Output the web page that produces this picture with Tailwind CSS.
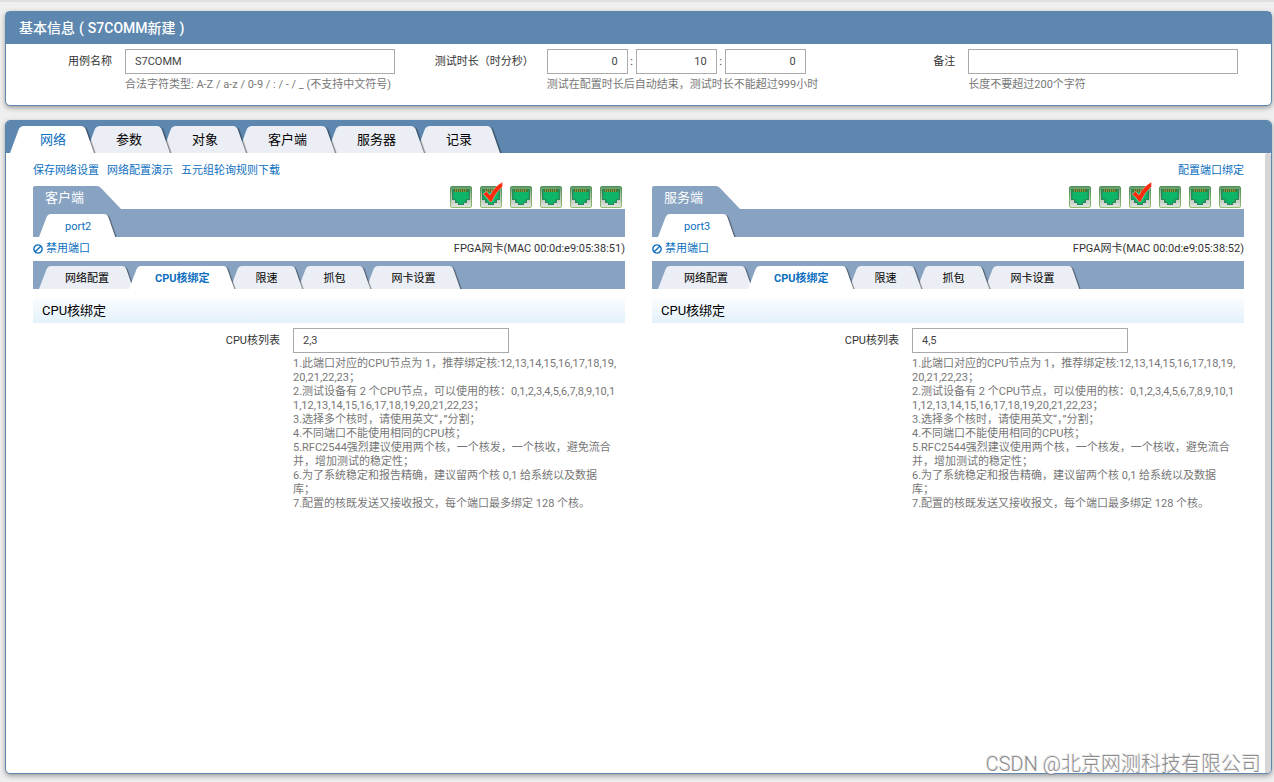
<!DOCTYPE html>
<html lang="zh-CN">
<head>
<meta charset="utf-8">
<title>S7COMM新建</title>
<script src="https://cdn.jsdelivr.net/npm/@tailwindcss/browser@4"></script>
</head>
<body class="relative flex h-screen flex-col gap-[14px] bg-[#efefef] pt-[11px] pr-[2px] pb-2 pl-[5px] font-['Roboto','Noto_Sans_CJK_SC',sans-serif] text-[11px] leading-[14px] text-[#333]">

<svg class="absolute size-0" aria-hidden="true">
  <defs>
    <linearGradient id="port-bg" x1="0" y1="0" x2="0" y2="1"><stop offset="0" stop-color="#5c9a62"/><stop offset=".35" stop-color="#a9b8a8"/><stop offset="1" stop-color="#e4e4e2"/></linearGradient>
    <linearGradient id="port-edge" x1="0" y1="0" x2="0" y2="1"><stop offset="0" stop-color="#4d9154"/><stop offset="1" stop-color="#94bf6c"/></linearGradient>
  </defs>
  <symbol id="tab-left" viewBox="0 0 16 27" preserveAspectRatio="none"><path fill="currentColor" d="M16 0H14Q10 0 8.500 4L0 27H16Z"/></symbol>
  <symbol id="tab-right" viewBox="0 0 20 27" preserveAspectRatio="none">
    <path fill="#000" fill-opacity=".15" d="M0 1H7Q10.500 1 12 4L20 27H0Z"/>
    <path fill="#000" fill-opacity=".35" d="M0 .5H6Q9.500 .5 11 4L19.200 27H0Z"/>
    <path fill="currentColor" d="M0 0H5Q8.500 0 10 4L18 27H0Z"/>
  </symbol>
  <symbol id="port" viewBox="0 0 22 22">
    <rect x=".5" y=".5" width="21" height="21" rx="1.500" fill="url(#port-bg)" stroke="url(#port-edge)"/>
    <path fill="#2a8a58" d="M2 3H20V14H17V17H14V19H8V17H5V14H2Z"/>
    <path fill="#0cb568" d="M3.500 5H18.500V13H15.500V16H13V18H9V16H6.500V13H3.500Z"/>
    <path fill="#3f7a35" d="M4 3H18V6H4Z"/>
    <path stroke="#8f8c40" stroke-width="1" d="M5.500 3V6M7.500 3V6M9.500 3V6M11.500 3V6M13.500 3V6M15.500 3V6"/>
  </symbol>
  <symbol id="check" viewBox="0 0 20 20"><path fill="#ff2a0c" stroke="#fff" stroke-opacity=".6" stroke-width=".6" d="M0 12L3.500 9.500L7 13Q11 5 19.500 0V4.500Q13 10 8.500 20H7Q4 15 0 12Z"/></symbol>
  <symbol id="ban" viewBox="0 0 10 10"><path fill="none" stroke="currentColor" stroke-width="1.400" d="M5 .9A4.100 4.100 0 1 1 4.990 .9M2.200 7.800L7.800 2.200"/></symbol>
</svg>

<div class="absolute inset-x-0 top-0 h-[2px] bg-[#dfdfdf]"></div>

<section class="shrink-0 rounded-[5px] border border-[#5d87af] bg-white pb-[13px] shadow-[0_2px_5px_rgba(0,0,0,0.35)]">
  <h1 class="flex h-8 items-center gap-1 bg-[#5d87af] pl-[13px] text-[14px] font-medium text-white"><span>基本信息</span><span>(</span><span>S7COMM新建</span><span>)</span></h1>
  <form class="grid grid-cols-3 pt-[5px]">
    <div class="flex gap-[13px]">
      <label for="name" class="w-[106px] shrink-0 pt-[6px] text-right">用例名称</label>
      <div>
        <input id="name" type="text" value="S7COMM" class="block h-[25px] w-[270px] border border-[#aaa] px-[9px] text-[#444]">
        <p class="pt-1 text-[#777]">合法字符类型: A-Z / a-z / 0-9 / : / - / _ (不支持中文符号)</p>
      </div>
    </div>
    <div class="flex gap-[13px]">
      <label for="hours" class="w-[106px] shrink-0 pt-[6px] text-right">测试时长（时分秒）</label>
      <div>
        <div class="flex items-center">
          <input id="hours" type="text" value="0" class="h-[25px] w-[81px] border border-[#aaa] px-[9px] text-right text-[#444]">
          <span class="w-2 text-center">:</span>
          <input aria-label="分" type="text" value="10" class="h-[25px] w-[81px] border border-[#aaa] px-[9px] text-right text-[#444]">
          <span class="w-2 text-center">:</span>
          <input aria-label="秒" type="text" value="0" class="h-[25px] w-[81px] border border-[#aaa] px-[9px] text-right text-[#444]">
        </div>
        <p class="pt-1 text-[#777]">测试在配置时长后自动结束，测试时长不能超过999小时</p>
      </div>
    </div>
    <div class="flex gap-[13px]">
      <label for="note" class="w-[106px] shrink-0 pt-[6px] text-right">备注</label>
      <div>
        <input id="note" type="text" class="block h-[25px] w-[270px] border border-[#aaa] px-[9px]">
        <p class="pt-1 text-[#777]">长度不要超过200个字符</p>
      </div>
    </div>
  </form>
</section>

<section class="flex min-h-0 grow flex-col overflow-hidden rounded-[5px] border border-[#5d87af] bg-white shadow-[0_2px_5px_rgba(0,0,0,0.35)]">
  <nav class="flex h-8 shrink-0 items-end bg-[#5d87af] pl-1 text-[13px] text-black">
    <button class="relative z-6 -mr-[10px] flex h-[27px] text-white"><svg class="h-full w-4"><use href="#tab-left"/></svg><span class="flex h-full items-center bg-white pr-[10px] pl-[14px] text-[#0d6fc0]">网络</span><svg class="h-full w-5"><use href="#tab-right"/></svg></button>
    <button class="relative z-5 -mr-[10px] flex h-[27px] text-[#ebeef4]"><svg class="h-full w-4"><use href="#tab-left"/></svg><span class="flex h-full items-center bg-[#ebeef4] pr-[10px] pl-[14px] text-black">参数</span><svg class="h-full w-5"><use href="#tab-right"/></svg></button>
    <button class="relative z-4 -mr-[10px] flex h-[27px] text-[#ebeef4]"><svg class="h-full w-4"><use href="#tab-left"/></svg><span class="flex h-full items-center bg-[#ebeef4] pr-[10px] pl-[14px] text-black">对象</span><svg class="h-full w-5"><use href="#tab-right"/></svg></button>
    <button class="relative z-3 -mr-[10px] flex h-[27px] text-[#ebeef4]"><svg class="h-full w-4"><use href="#tab-left"/></svg><span class="flex h-full items-center bg-[#ebeef4] pr-[10px] pl-[14px] text-black">客户端</span><svg class="h-full w-5"><use href="#tab-right"/></svg></button>
    <button class="relative z-2 -mr-[10px] flex h-[27px] text-[#ebeef4]"><svg class="h-full w-4"><use href="#tab-left"/></svg><span class="flex h-full items-center bg-[#ebeef4] pr-[10px] pl-[14px] text-black">服务器</span><svg class="h-full w-5"><use href="#tab-right"/></svg></button>
    <button class="relative z-1 flex h-[27px] text-[#ebeef4]"><svg class="h-full w-4"><use href="#tab-left"/></svg><span class="flex h-full items-center bg-[#ebeef4] pr-[10px] pl-[14px] text-black">记录</span><svg class="h-full w-5"><use href="#tab-right"/></svg></button>
  </nav>

  <div class="flex min-h-0 grow">
    <main class="min-w-0 grow pt-[11px] pr-[21px] pl-[27px]">
      <div class="flex gap-2 text-[#0d6fc0]">
        <a href="#">保存网络设置</a><a href="#">网络配置演示</a><a href="#">五元组轮询规则下载</a><a href="#" class="ml-auto">配置端口绑定</a>
      </div>

      <div class="grid grid-cols-2 gap-[27px] pt-2">
        <section>
          <div class="flex h-[23px] items-start justify-between pr-[3px]">
            <div class="flex text-[#87a3c1]"><h2 class="flex h-[23px] w-16 items-center rounded-tl-[2px] bg-[#87a3c1] pl-3 text-[13px] text-white">客户端</h2><svg class="h-[23px] w-6" viewBox="0 0 24 23"><path fill="currentColor" d="M0 0Q2 0 4 2L24 23H0Z"/></svg></div>
            <div class="flex gap-2">
              <svg class="size-[22px]"><use href="#port"/></svg>
              <span class="relative"><svg class="size-[22px]"><use href="#port"/></svg><svg class="absolute -top-1 left-[3px] size-5"><use href="#check"/></svg></span>
              <svg class="size-[22px]"><use href="#port"/></svg>
              <svg class="size-[22px]"><use href="#port"/></svg>
              <svg class="size-[22px]"><use href="#port"/></svg>
              <svg class="size-[22px]"><use href="#port"/></svg>
            </div>
          </div>
          <div class="flex h-7 items-end bg-[#87a3c1] pl-[6px]">
            <button class="flex h-[23px] text-white"><svg class="h-full w-[14px]"><use href="#tab-left"/></svg><span class="flex h-full items-center bg-white pt-[2px] pr-[9px] pl-3 text-[#0d6fc0]">port2</span><svg class="h-full w-[17px]"><use href="#tab-right"/></svg></button>
          </div>
          <div class="flex h-6 items-center justify-between">
            <a href="#" class="flex items-center gap-[3px] text-[#0d6fc0]"><svg class="size-[10px]"><use href="#ban"/></svg>禁用端口</a>
            <span>FPGA网卡(MAC 00:0d:e9:05:38:51)</span>
          </div>
          <div class="flex h-7 items-end bg-[#87a3c1] pl-[6px]">
            <button class="relative z-4 -mr-[6px] flex h-[23px] text-[#ebeef4]"><svg class="h-full w-[14px]"><use href="#tab-left"/></svg><span class="flex h-full items-center bg-[#ebeef4] pt-[2px] pr-[9px] pl-3 text-black">网络配置</span><svg class="h-full w-[17px]"><use href="#tab-right"/></svg></button>
            <button class="relative z-5 -mr-[6px] flex h-[23px] text-white"><svg class="h-full w-[14px]"><use href="#tab-left"/></svg><span class="flex h-full items-center bg-white pt-[2px] pr-[9px] pl-3 font-bold text-[#0d6fc0]">CPU核绑定</span><svg class="h-full w-[17px]"><use href="#tab-right"/></svg></button>
            <button class="relative z-3 -mr-[6px] flex h-[23px] text-[#ebeef4]"><svg class="h-full w-[14px]"><use href="#tab-left"/></svg><span class="flex h-full items-center bg-[#ebeef4] pt-[2px] pr-[9px] pl-3 text-black">限速</span><svg class="h-full w-[17px]"><use href="#tab-right"/></svg></button>
            <button class="relative z-2 -mr-[6px] flex h-[23px] text-[#ebeef4]"><svg class="h-full w-[14px]"><use href="#tab-left"/></svg><span class="flex h-full items-center bg-[#ebeef4] pt-[2px] pr-[9px] pl-3 text-black">抓包</span><svg class="h-full w-[17px]"><use href="#tab-right"/></svg></button>
            <button class="relative z-1 flex h-[23px] text-[#ebeef4]"><svg class="h-full w-[14px]"><use href="#tab-left"/></svg><span class="flex h-full items-center bg-[#ebeef4] pt-[2px] pr-[9px] pl-3 text-black">网卡设置</span><svg class="h-full w-[17px]"><use href="#tab-right"/></svg></button>
          </div>
          <h3 class="mt-[9px] flex h-[25px] items-center bg-linear-to-b from-[#fbfdff] to-[#e3f1fa] pl-[9px] text-[13px] text-black">CPU核绑定</h3>
          <div class="flex gap-[13px] pt-[5px]">
            <label for="cores-a" class="w-[247px] shrink-0 pt-[6px] text-right">CPU核列表</label>
            <div class="whitespace-nowrap">
              <input id="cores-a" type="text" value="2,3" class="block h-[25px] w-[216px] border border-[#aaa] px-[9px] text-[#444]">
              <p class="pt-1 text-[#777]">1.此端口对应的CPU节点为 1，推荐绑定核:12,13,14,15,16,17,18,19,<br>20,21,22,23；<br>2.测试设备有 2 个CPU节点，可以使用的核：0,1,2,3,4,5,6,7,8,9,10,1<br>1,12,13,14,15,16,17,18,19,20,21,22,23；<br>3.选择多个核时，请使用英文“，”分割；<br>4.不同端口不能使用相同的CPU核；<br>5.RFC2544强烈建议使用两个核，一个核发，一个核收，避免流合<br>并，增加测试的稳定性；<br>6.为了系统稳定和报告精确，建议留两个核 0,1 给系统以及数据<br>库；<br>7.配置的核既发送又接收报文，每个端口最多绑定 128 个核。</p>
            </div>
          </div>
        </section>

        <section>
          <div class="flex h-[23px] items-start justify-between pr-[3px]">
            <div class="flex text-[#87a3c1]"><h2 class="flex h-[23px] w-16 items-center rounded-tl-[2px] bg-[#87a3c1] pl-3 text-[13px] text-white">服务端</h2><svg class="h-[23px] w-6" viewBox="0 0 24 23"><path fill="currentColor" d="M0 0Q2 0 4 2L24 23H0Z"/></svg></div>
            <div class="flex gap-2">
              <svg class="size-[22px]"><use href="#port"/></svg>
              <svg class="size-[22px]"><use href="#port"/></svg>
              <span class="relative"><svg class="size-[22px]"><use href="#port"/></svg><svg class="absolute -top-1 left-[3px] size-5"><use href="#check"/></svg></span>
              <svg class="size-[22px]"><use href="#port"/></svg>
              <svg class="size-[22px]"><use href="#port"/></svg>
              <svg class="size-[22px]"><use href="#port"/></svg>
            </div>
          </div>
          <div class="flex h-7 items-end bg-[#87a3c1] pl-[6px]">
            <button class="flex h-[23px] text-white"><svg class="h-full w-[14px]"><use href="#tab-left"/></svg><span class="flex h-full items-center bg-white pt-[2px] pr-[9px] pl-3 text-[#0d6fc0]">port3</span><svg class="h-full w-[17px]"><use href="#tab-right"/></svg></button>
          </div>
          <div class="flex h-6 items-center justify-between">
            <a href="#" class="flex items-center gap-[3px] text-[#0d6fc0]"><svg class="size-[10px]"><use href="#ban"/></svg>禁用端口</a>
            <span>FPGA网卡(MAC 00:0d:e9:05:38:52)</span>
          </div>
          <div class="flex h-7 items-end bg-[#87a3c1] pl-[6px]">
            <button class="relative z-4 -mr-[6px] flex h-[23px] text-[#ebeef4]"><svg class="h-full w-[14px]"><use href="#tab-left"/></svg><span class="flex h-full items-center bg-[#ebeef4] pt-[2px] pr-[9px] pl-3 text-black">网络配置</span><svg class="h-full w-[17px]"><use href="#tab-right"/></svg></button>
            <button class="relative z-5 -mr-[6px] flex h-[23px] text-white"><svg class="h-full w-[14px]"><use href="#tab-left"/></svg><span class="flex h-full items-center bg-white pt-[2px] pr-[9px] pl-3 font-bold text-[#0d6fc0]">CPU核绑定</span><svg class="h-full w-[17px]"><use href="#tab-right"/></svg></button>
            <button class="relative z-3 -mr-[6px] flex h-[23px] text-[#ebeef4]"><svg class="h-full w-[14px]"><use href="#tab-left"/></svg><span class="flex h-full items-center bg-[#ebeef4] pt-[2px] pr-[9px] pl-3 text-black">限速</span><svg class="h-full w-[17px]"><use href="#tab-right"/></svg></button>
            <button class="relative z-2 -mr-[6px] flex h-[23px] text-[#ebeef4]"><svg class="h-full w-[14px]"><use href="#tab-left"/></svg><span class="flex h-full items-center bg-[#ebeef4] pt-[2px] pr-[9px] pl-3 text-black">抓包</span><svg class="h-full w-[17px]"><use href="#tab-right"/></svg></button>
            <button class="relative z-1 flex h-[23px] text-[#ebeef4]"><svg class="h-full w-[14px]"><use href="#tab-left"/></svg><span class="flex h-full items-center bg-[#ebeef4] pt-[2px] pr-[9px] pl-3 text-black">网卡设置</span><svg class="h-full w-[17px]"><use href="#tab-right"/></svg></button>
          </div>
          <h3 class="mt-[9px] flex h-[25px] items-center bg-linear-to-b from-[#fbfdff] to-[#e3f1fa] pl-[9px] text-[13px] text-black">CPU核绑定</h3>
          <div class="flex gap-[13px] pt-[5px]">
            <label for="cores-b" class="w-[247px] shrink-0 pt-[6px] text-right">CPU核列表</label>
            <div class="whitespace-nowrap">
              <input id="cores-b" type="text" value="4,5" class="block h-[25px] w-[216px] border border-[#aaa] px-[9px] text-[#444]">
              <p class="pt-1 text-[#777]">1.此端口对应的CPU节点为 1，推荐绑定核:12,13,14,15,16,17,18,19,<br>20,21,22,23；<br>2.测试设备有 2 个CPU节点，可以使用的核：0,1,2,3,4,5,6,7,8,9,10,1<br>1,12,13,14,15,16,17,18,19,20,21,22,23；<br>3.选择多个核时，请使用英文“，”分割；<br>4.不同端口不能使用相同的CPU核；<br>5.RFC2544强烈建议使用两个核，一个核发，一个核收，避免流合<br>并，增加测试的稳定性；<br>6.为了系统稳定和报告精确，建议留两个核 0,1 给系统以及数据<br>库；<br>7.配置的核既发送又接收报文，每个端口最多绑定 128 个核。</p>
            </div>
          </div>
        </section>
      </div>
    </main>
    <div class="w-[6px] shrink-0 rounded-t-[3px] bg-[#d6d6d6]"></div>
  </div>
</section>

<div class="absolute right-[13px] bottom-[6px] z-10 text-[20px] leading-6 font-light text-[#8c8c8c] [text-shadow:-1px_-1px_0_#e4e4e4]">CSDN @北京网测科技有限公司</div>
</body>
</html>
